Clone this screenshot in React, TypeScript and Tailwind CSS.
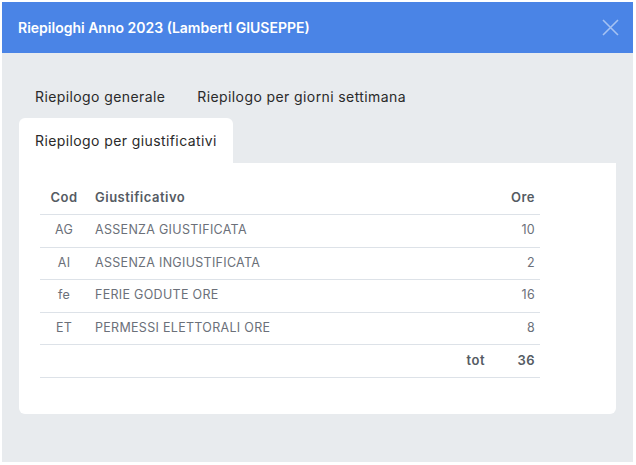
import React from 'react';

const rows = [
  { cod: 'AG', desc: 'ASSENZA GIUSTIFICATA', ore: 10 },
  { cod: 'AI', desc: 'ASSENZA INGIUSTIFICATA', ore: 2 },
  { cod: 'fe', desc: 'FERIE GODUTE ORE', ore: 16 },
  { cod: 'ET', desc: 'PERMESSI ELETTORALI ORE', ore: 8 },
];

export default function App() {
  const total = rows.reduce((s, r) => s + r.ore, 0);
  return (
    <div
      className="w-[636px] h-[465px] bg-white pl-[2px] pt-[2px] pr-[3px] pb-[3px]"
      style={{ fontFamily: 'Inter, "Noto Sans", sans-serif' }}
    >
      <div className="h-full flex flex-col bg-[#e8ebee]">
        <div className="h-[51px] shrink-0 bg-[#4a84e6] flex items-center justify-between pl-4 pr-[14px]">
          <h1 className="text-white text-[14px] font-semibold">Riepiloghi Anno 2023 (LambertI GIUSEPPE)</h1>
          <button className="text-white/50">
            <svg width="17" height="17" viewBox="0 0 17 17" fill="none" stroke="currentColor" strokeWidth="1.6">
              <path d="M1 1L16 16M16 1L1 16" />
            </svg>
          </button>
        </div>

        <div className="flex-1 flex flex-col pt-[21px] pl-[17px] pr-[17px] pb-[48px]">
          <div className="flex flex-wrap w-[450px] text-[14px] tracking-[0.4px] text-[#2a2a2a]">
            <div className="h-[44px] px-4 flex items-center">Riepilogo generale</div>
            <div className="h-[44px] px-4 flex items-center">Riepilogo per giorni settimana</div>
            <div className="h-[45px] px-4 flex items-center bg-white rounded-t-md">Riepilogo per giustificativi</div>
          </div>

          <div className="flex-1 bg-white rounded-b-md pt-[19px] px-[21px]">
            <div className="w-[500px] text-[12.5px] tracking-[0.3px]">
              <div className="flex h-[33px] items-center border-b border-[#dde2e8] font-semibold text-[#555b63] text-[13px] tracking-[0.5px]">
                <div className="w-[48px] text-center">Cod</div>
                <div className="flex-1 pl-[7px]">Giustificativo</div>
                <div className="w-[50px] text-right pr-[5px]">Ore</div>
              </div>
              {rows.map((r) => (
                <div key={r.cod} className="flex h-[32.5px] items-center border-b border-[#dde2e8] text-[#6b7079]">
                  <div className="w-[48px] text-center">{r.cod}</div>
                  <div className="flex-1 pl-[7px]">{r.desc}</div>
                  <div className="w-[50px] text-right pr-[5px]">{r.ore}</div>
                </div>
              ))}
              <div className="flex h-[32.5px] items-center border-b border-[#dde2e8] font-semibold text-[#555b63] text-[13px] tracking-[0.5px]">
                <div className="w-[48px]" />
                <div className="flex-1 text-right pr-[5px]">tot</div>
                <div className="w-[50px] text-right pr-[5px]">{total}</div>
              </div>
            </div>
          </div>
        </div>
      </div>
    </div>
  );
}
